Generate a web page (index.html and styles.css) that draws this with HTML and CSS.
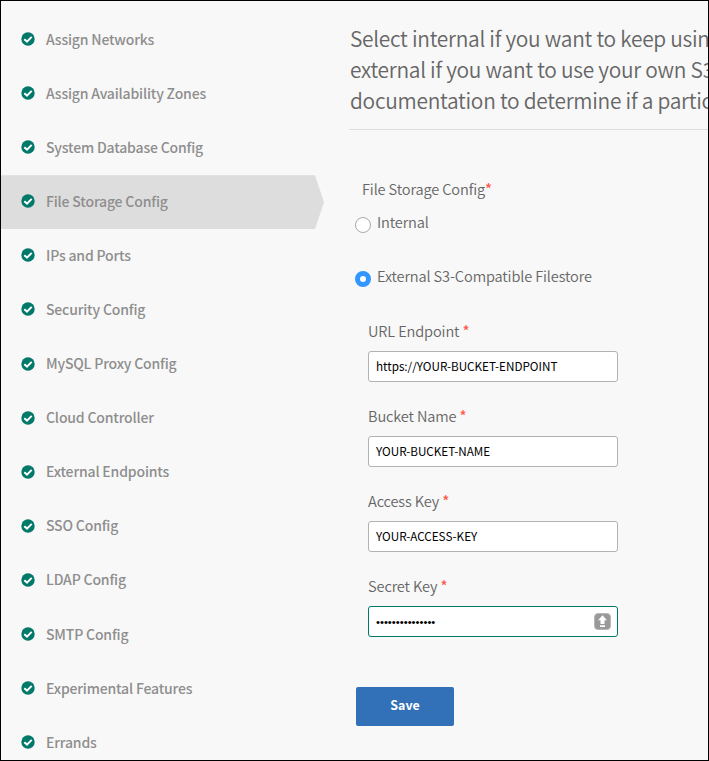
FILE: index.html
```html
<!DOCTYPE html>
<html lang="en">
<head>
<meta charset="utf-8">
<title>File Storage Config</title>
<link rel="stylesheet" href="styles.css">
</head>
<body>
<svg class="defs" width="0" height="0" aria-hidden="true">
  <symbol id="check" viewBox="0 0 14 14">
    <circle cx="7" cy="7" r="6.7" fill="#00796b"/>
    <path d="M3.3 7.2 6 9.6 10.7 4.9" fill="none" stroke="#fff" stroke-width="2"/>
  </symbol>
</svg>
<div class="frame">
  <nav class="sidebar">
    <a class="item"><svg class="check"><use href="#check"/></svg><span>Assign Networks</span></a>
    <a class="item"><svg class="check"><use href="#check"/></svg><span>Assign Availability Zones</span></a>
    <a class="item"><svg class="check"><use href="#check"/></svg><span>System Database Config</span></a>
    <a class="item active"><svg class="check"><use href="#check"/></svg><span>File Storage Config</span></a>
    <a class="item"><svg class="check"><use href="#check"/></svg><span>IPs and Ports</span></a>
    <a class="item"><svg class="check"><use href="#check"/></svg><span>Security Config</span></a>
    <a class="item"><svg class="check"><use href="#check"/></svg><span>MySQL Proxy Config</span></a>
    <a class="item"><svg class="check"><use href="#check"/></svg><span>Cloud Controller</span></a>
    <a class="item"><svg class="check"><use href="#check"/></svg><span>External Endpoints</span></a>
    <a class="item"><svg class="check"><use href="#check"/></svg><span>SSO Config</span></a>
    <a class="item"><svg class="check"><use href="#check"/></svg><span>LDAP Config</span></a>
    <a class="item"><svg class="check"><use href="#check"/></svg><span>SMTP Config</span></a>
    <a class="item"><svg class="check"><use href="#check"/></svg><span>Experimental Features</span></a>
    <a class="item"><svg class="check"><use href="#check"/></svg><span>Errands</span></a>
  </nav>
  <main class="content">
    <p class="intro">Select internal if you want to keep using<br>external if you want to use your own S3<br>documentation to determine if a particular</p>
    <form class="form">
      <div class="group-label">File Storage Config<span class="req">*</span></div>
      <label class="option"><span class="radio"></span><span>Internal</span></label>
      <label class="option"><span class="radio checked"></span><span>External S3-Compatible Filestore</span></label>
      <div class="fields">
        <div class="field">
          <label>URL Endpoint <span class="req">*</span></label>
          <div class="input">https://YOUR-BUCKET-ENDPOINT</div>
        </div>
        <div class="field">
          <label>Bucket Name <span class="req">*</span></label>
          <div class="input">YOUR-BUCKET-NAME</div>
        </div>
        <div class="field">
          <label>Access Key <span class="req">*</span></label>
          <div class="input">YOUR-ACCESS-KEY</div>
        </div>
        <div class="field">
          <label>Secret Key <span class="req">*</span></label>
          <div class="input focus"><span class="dots">•••••••••••••••</span>
            <svg class="keyicon" viewBox="0 0 17 17"><rect x=".5" y=".5" width="16" height="16" rx="3.5" fill="#999" stroke="#b8b8b8"/><path d="M8.5 2.2 13 7.2h-2.5V11h-4V7.2H4zM6 12.2h5V14H6z" fill="#fff"/></svg>
          </div>
        </div>
      </div>
      <button class="save" type="button">Save</button>
    </form>
  </main>
</div>
</body>
</html>
```
FILE: styles.css
```css
* { box-sizing: border-box; }
body {
  margin: 0;
  font-family: "Noto Sans CJK SC", "Open Sans", sans-serif;
  color: #666;
}
.defs { display: block; }
.frame {
  display: flex;
  width: 709px;
  height: 761px;
  border: 1px solid #000;
  background: #f8f8f8;
  overflow: hidden;
}
.sidebar {
  flex: none;
  width: 323px;
  padding-top: 12px;
}
.item {
  display: flex;
  align-items: center;
  height: 54.08px;
  padding: 0 0 2.75px 20px;
  gap: 11px;
  font-size: 14px;
  font-weight: 500;
  letter-spacing: -.17px;
  line-height: 20px;
  color: #8e8e8e;
  white-space: nowrap;
}
.item.active {
  background: #ddd;
  clip-path: polygon(0 0, 314px 0, 323px 50%, 314px 100%, 0 100%);
}
.check { width: 14px; height: 14px; flex: none; position: relative; top: .4px; }
.content {
  flex: 1;
  min-width: 0;
  padding: 22px 0 0 26px;
}
.intro {
  margin: 0 0 0 -1px;
  padding-left: 1px;
  height: 107px;
  border-bottom: 1px solid #ddd;
  font-size: 20.9px;
  font-weight: 350;
  letter-spacing: -.27px;
  line-height: 31px;
  white-space: nowrap;
}
.form { padding: 48px 0 0 6px; }
.group-label, .option, .field label {
  font-size: 14.6px;
  font-weight: 350;
  letter-spacing: -.13px;
  line-height: 22px;
}
.group-label { padding-left: 6px; }
.req { color: #ff5a4c; font-weight: 500; }
.option {
  display: flex;
  gap: 6px;
  height: 22px;
  margin-top: 11px;
}
.option + .option { margin-top: 32px; }
.radio {
  width: 16px;
  height: 16px;
  margin: 6px 0 0 -1px;
  border: 1px solid #aaa;
  border-radius: 50%;
  background: #fff;
}
.radio.checked {
  border: 5px solid #3296ff;
}
.fields { padding: 33px 0 0 12px; }
.field { height: 85px; }
.field label { display: block; height: 31px; white-space: pre; }
.input {
  display: flex;
  align-items: center;
  justify-content: space-between;
  width: 250px;
  height: 31px;
  padding: 0 7px 3px;
  border: 1px solid #b2b2b2;
  border-radius: 3px;
  background: #fff;
  color: #000;
  font-size: 11.7px;
  font-weight: 400;
}
.input.focus { border-color: #00796b; padding: 0 6px 0 7px; }
.dots { font-family: "Liberation Sans", sans-serif; font-size: 11.3px; }
.keyicon { width: 17px; height: 17px; }
.save {
  display: block;
  width: 98px;
  height: 39px;
  margin-top: 27px;
  padding: 0 0 3px;
  border: 0;
  border-radius: 2px;
  background: #3270b7;
  color: #fff;
  font: 700 12.4px/20px "Noto Sans CJK SC", "Open Sans", sans-serif;
}
```
